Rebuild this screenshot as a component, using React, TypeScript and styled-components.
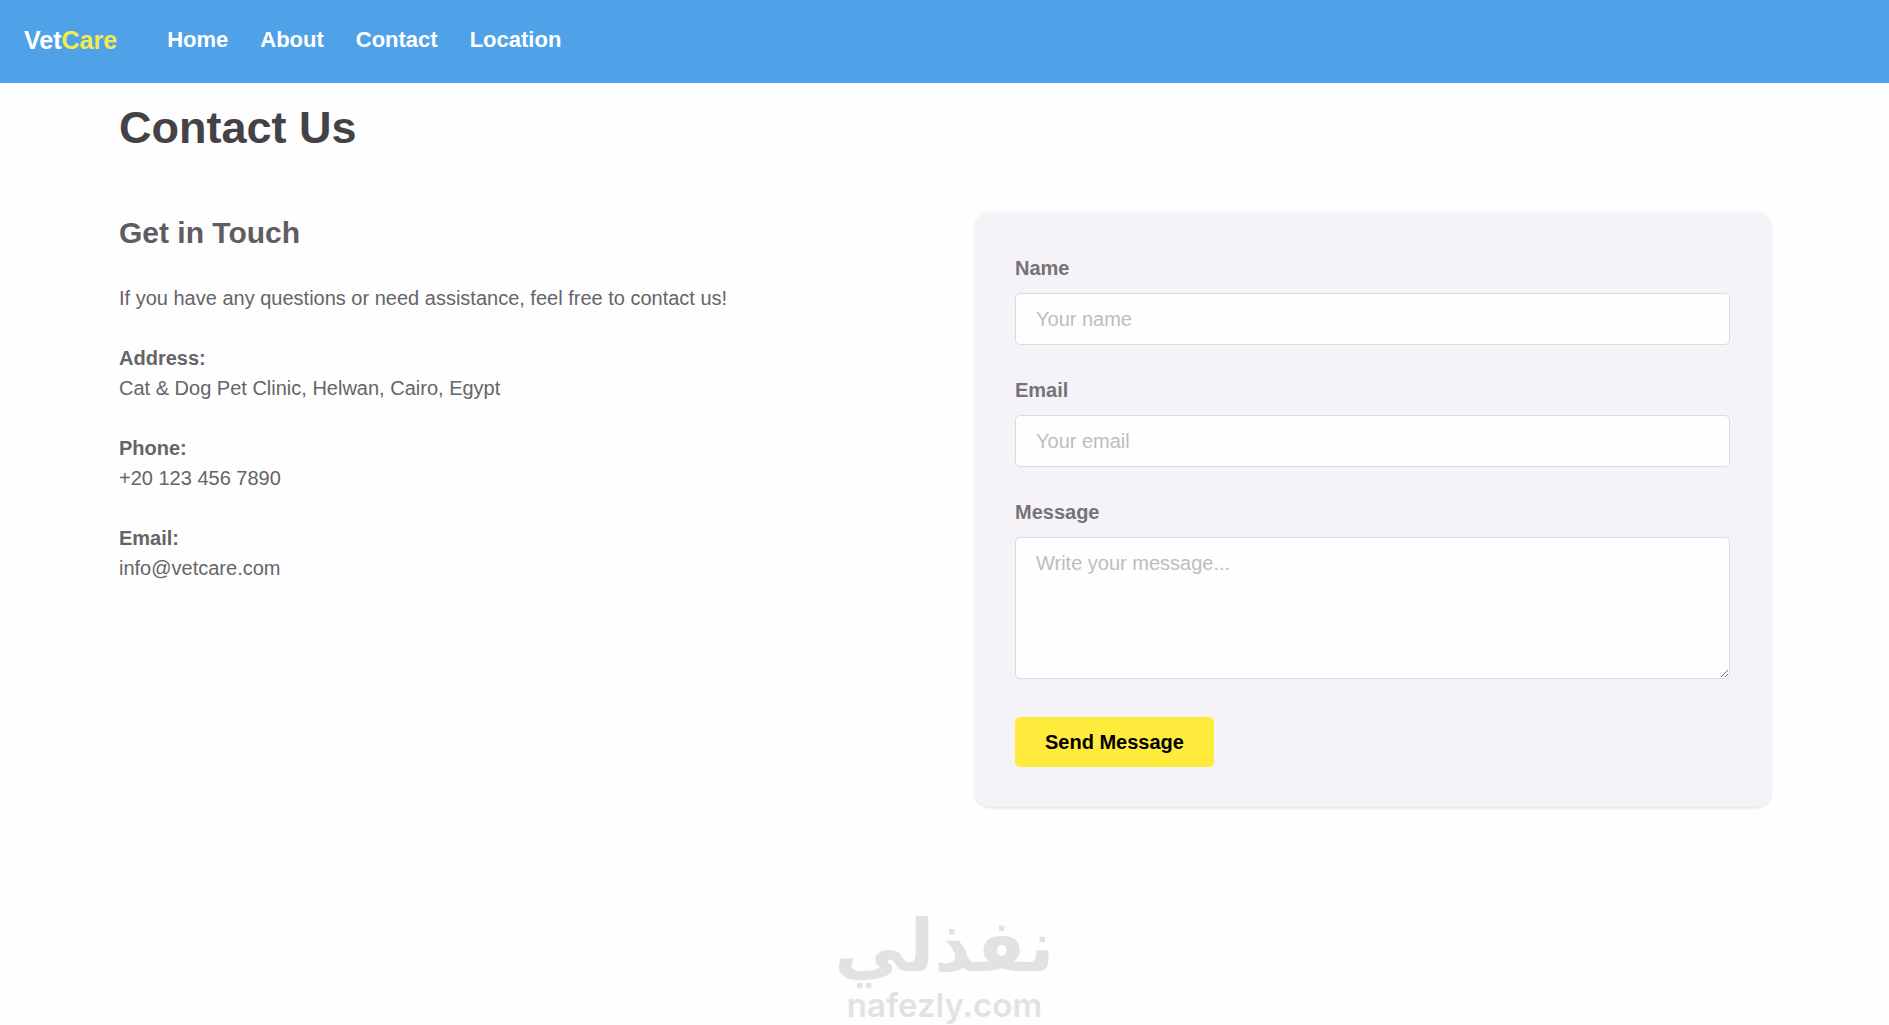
import React from "react";
import styled, { createGlobalStyle } from "styled-components";

const GlobalStyle = createGlobalStyle`
  *, *::before, *::after { box-sizing: border-box; }
  body {
    margin: 0;
    background: #fefefe;
    color: #666468;
    font: 20px/30px "Liberation Sans", Arial, sans-serif;
  }
`;

const Page = styled.div`
  min-height: 100vh;
  display: flex;
  flex-direction: column;
`;

const Header = styled.header`
  display: flex;
  align-items: center;
  gap: 50px;
  padding: 25px 24px 28px;
  background: #50a2e8;
`;

const Logo = styled.a`
  color: #ffffff;
  font-size: 25px;
  font-weight: 700;
  text-decoration: none;
`;

const LogoAccent = styled.span`
  color: #f3ea4c;
`;

const Nav = styled.nav`
  display: flex;
  gap: 32px;
`;

const NavLink = styled.a`
  color: #ffffff;
  font-size: 22px;
  font-weight: 700;
  text-decoration: none;
`;

const Main = styled.main`
  padding: 20px 118px 30px 119px;
`;

const Title = styled.h1`
  margin: 0 0 59px;
  color: #444246;
  font-size: 45px;
  line-height: 50px;
`;

const Columns = styled.div`
  display: grid;
  grid-template-columns: 1fr 1fr;
  gap: 60px;
  align-items: start;
`;

const Info = styled.section`
  display: flex;
  flex-direction: column;
  gap: 30px;
`;

const Subtitle = styled.h2`
  margin: 0;
  color: #5f5d61;
  font-size: 30px;
  line-height: 41px;
`;

const Paragraph = styled.p`
  margin: 0;
`;

const Term = styled.strong`
  display: block;
`;

const Card = styled.form`
  display: flex;
  flex-direction: column;
  align-items: flex-start;
  gap: 30px;
  padding: 41px 41px 40px 40px;
  border-radius: 15px;
  background: #f5f3f7;
  box-shadow: 0 1px 3px rgba(60, 50, 70, 0.15);
`;

const Field = styled.div`
  display: flex;
  flex-direction: column;
  gap: 10px;
  width: 100%;
`;

const Label = styled.label`
  color: #757377;
  font-weight: 700;
`;

const Input = styled.input`
  width: 100%;
  padding: 10px 20px;
  border: 1px solid #dddadf;
  border-radius: 5px;
  background: #fefefe;
  color: #444246;
  font: inherit;
  &::placeholder { color: #bfbcc1; opacity: 1; }
`;

const TextArea = styled(Input).attrs({ as: "textarea" })<{ rows?: number }>`
  display: block;
  resize: vertical;
`;

const Submit = styled.button`
  margin-top: 8px;
  padding: 10px 30px;
  border: 0;
  border-radius: 5px;
  background: #ffeb3b;
  color: #000000;
  font: inherit;
  font-weight: 700;
  cursor: pointer;
`;

const Brand = styled.footer`
  display: flex;
  flex-direction: column;
  align-items: center;
  margin-top: auto;
  color: #e4e1e5;
  font-weight: 700;
`;

const BrandArabic = styled.span`
  font-family: "DejaVu Sans", sans-serif;
  font-size: 72px;
  line-height: 78px;
`;

const BrandLatin = styled.span`
  font-family: Inter, sans-serif;
  font-size: 33px;
  font-weight: 600;
  line-height: 40px;
`;

const links = ["Home", "About", "Contact", "Location"];

const details = [
  { term: "Address:", value: "Cat & Dog Pet Clinic, Helwan, Cairo, Egypt" },
  { term: "Phone:", value: "+20 123 456 7890" },
  { term: "Email:", value: "info@vetcare.com" },
];

export default function App() {
  return (
    <Page>
      <GlobalStyle />
      <Header>
        <Logo href="#home">
          Vet<LogoAccent>Care</LogoAccent>
        </Logo>
        <Nav>
          {links.map((link) => (
            <NavLink key={link} href={`#${link.toLowerCase()}`}>
              {link}
            </NavLink>
          ))}
        </Nav>
      </Header>
      <Main>
        <Title>Contact Us</Title>
        <Columns>
          <Info>
            <Subtitle>Get in Touch</Subtitle>
            <Paragraph>
              If you have any questions or need assistance, feel free to contact us!
            </Paragraph>
            {details.map(({ term, value }) => (
              <Paragraph key={term}>
                <Term>{term}</Term>
                {value}
              </Paragraph>
            ))}
          </Info>
          <Card onSubmit={(event: React.FormEvent) => event.preventDefault()}>
            <Field>
              <Label htmlFor="name">Name</Label>
              <Input id="name" type="text" placeholder="Your name" />
            </Field>
            <Field>
              <Label htmlFor="email">Email</Label>
              <Input id="email" type="email" placeholder="Your email" />
            </Field>
            <Field>
              <Label htmlFor="message">Message</Label>
              <TextArea id="message" rows={4} placeholder="Write your message..." />
            </Field>
            <Submit type="submit">Send Message</Submit>
          </Card>
        </Columns>
      </Main>
      <Brand>
        <BrandArabic lang="ar" dir="rtl">نفذلي</BrandArabic>
        <BrandLatin>nafezly.com</BrandLatin>
      </Brand>
    </Page>
  );
}
